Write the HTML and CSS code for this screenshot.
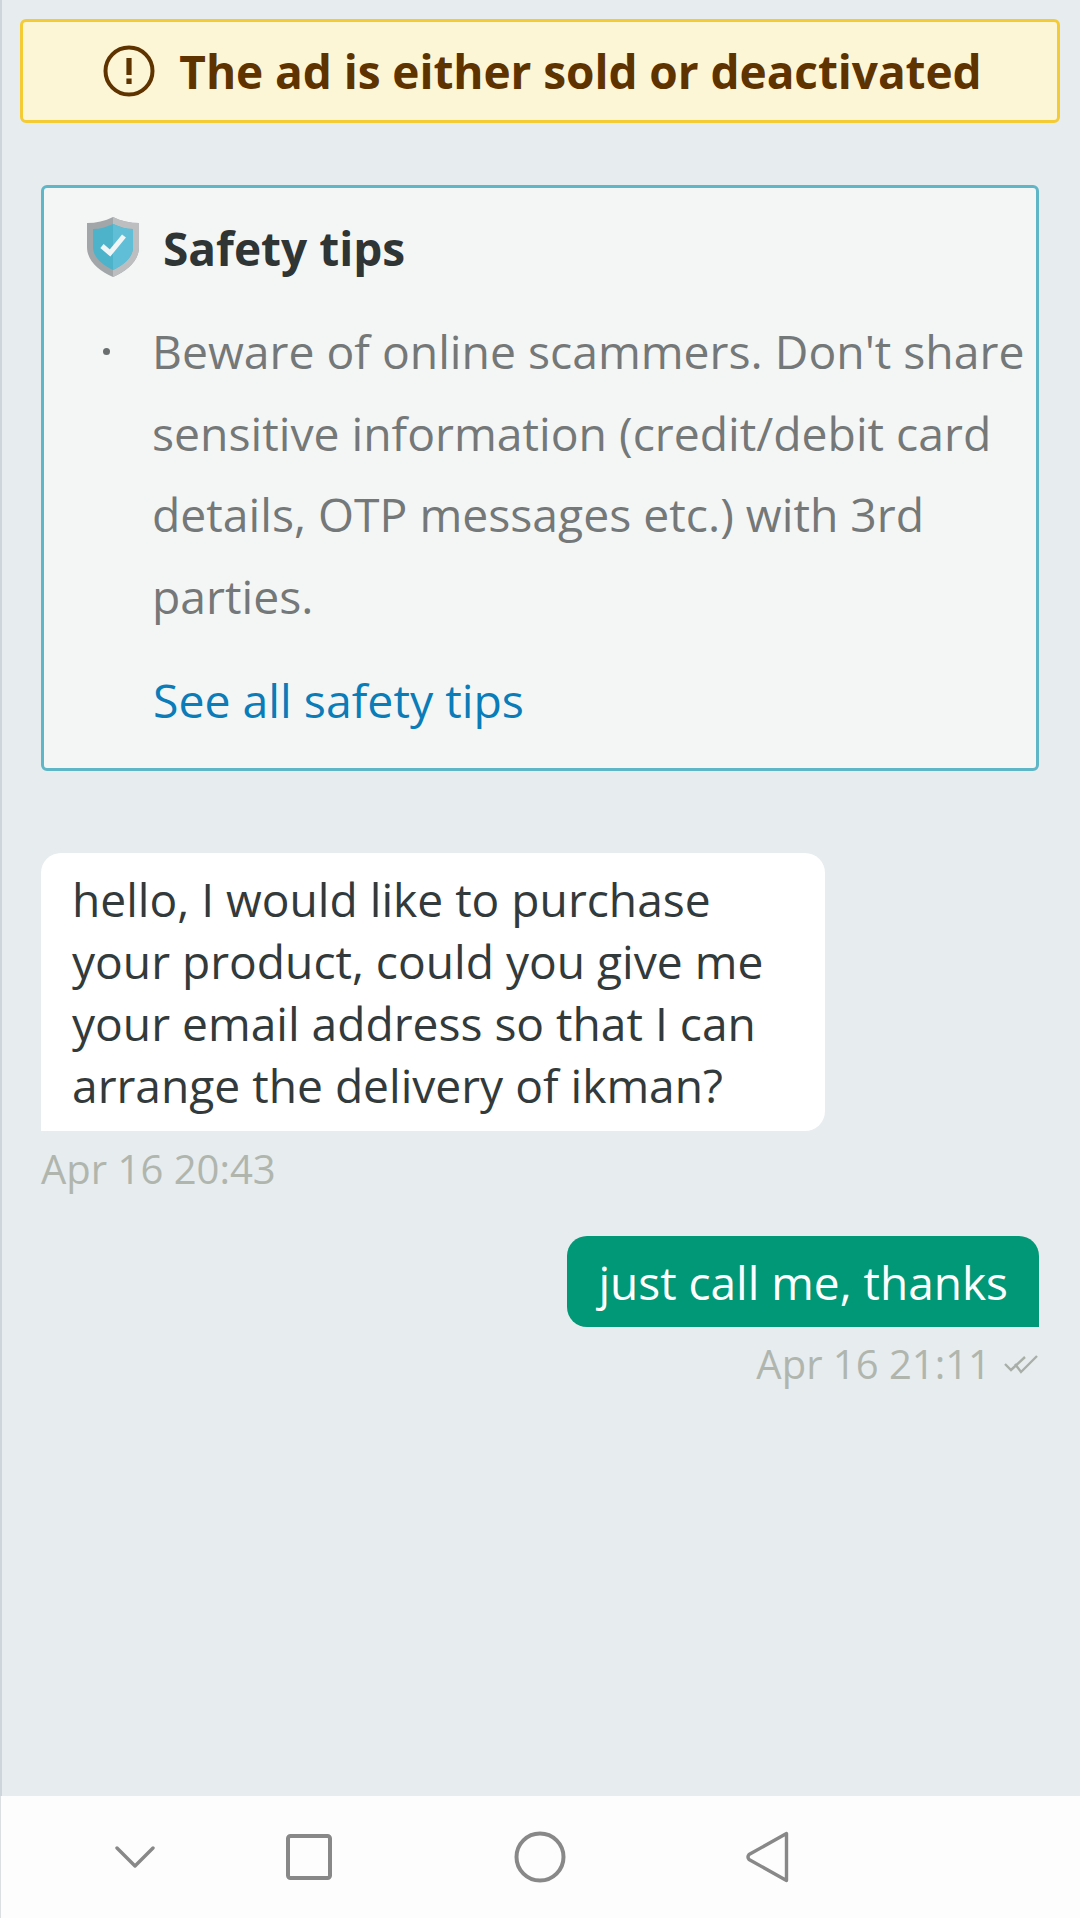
FILE: index.html
```html
<!DOCTYPE html>
<html lang="en">
<head>
<meta charset="utf-8">
<title>Chat</title>
<link rel="stylesheet" href="styles.css">
</head>
<body>
<main class="content">
  <div class="notice">
    <svg class="notice-icon" viewBox="0 0 52 52" aria-hidden="true">
      <circle cx="26" cy="26" r="23.5" fill="none" stroke="#5e3300" stroke-width="4"/>
      <rect x="23.4" y="13" width="5.2" height="17" fill="#5e3300"/>
      <rect x="23.4" y="33.5" width="5.2" height="5.5" fill="#5e3300"/>
    </svg>
    <span class="notice-text">The ad is either sold or deactivated</span>
  </div>

  <section class="tips">
    <div class="tips-head">
      <svg class="shield" viewBox="0 0 52 60" aria-hidden="true">
        <path d="M26 0 C34 4 43 6 52 6 V30 C52 44 40 54 26 60 C12 54 0 44 0 30 V6 C9 6 18 4 26 0Z" fill="#a3a6a8"/>
        <path d="M26 0 C34 4 43 6 52 6 V30 C52 44 40 54 26 60Z" fill="#bcbec0"/>
        <path d="M26 7 C33 10 39 12 46 12 V30 C46 40 37 48 26 53 C15 48 6 40 6 30 V12 C13 12 19 10 26 7Z" fill="#4db3cb"/>
        <path d="M26 7 C33 10 39 12 46 12 V30 C46 40 37 48 26 53Z" fill="#60bfd6"/>
        <path d="M15 29 L23 36 L37 19" fill="none" stroke="#f2f5f5" stroke-width="5"/>
      </svg>
      <h2 class="tips-title">Safety tips</h2>
    </div>
    <ul class="tips-list">
      <li>Beware of online scammers. Don't share sensitive information (credit/debit card details, OTP messages etc.) with 3rd parties.</li>
    </ul>
    <a class="tips-link" href="#">See all safety tips</a>
  </section>

  <div class="message incoming">
    <div class="bubble">hello, I would like to purchase your product, could you give me your email address so that I can arrange the delivery of ikman?</div>
    <div class="meta">Apr 16 20:43</div>
  </div>

  <div class="message outgoing">
    <div class="bubble">just call me, thanks</div>
    <div class="meta">Apr 16 21:11
      <svg class="ticks" viewBox="0 0 36 20" aria-hidden="true">
        <path d="M2 10 L8 16 L22 3 M12 10 L18 18 L34 2" fill="none" stroke="#a9afa8" stroke-width="2.4"/>
      </svg>
    </div>
  </div>
</main>

<nav class="navbar">
  <svg class="nav-chevron" viewBox="0 0 40 24" aria-hidden="true"><path d="M2 3 L20 21 L38 3" fill="none" stroke="#888" stroke-width="3.4" stroke-linecap="round" stroke-linejoin="round"/></svg>
  <svg class="nav-square" viewBox="0 0 46 48" aria-hidden="true"><rect x="2" y="3" width="42" height="42" rx="2.5" fill="none" stroke="#888" stroke-width="4"/></svg>
  <svg class="nav-circle" viewBox="0 0 52 52" aria-hidden="true"><circle cx="26" cy="26" r="23.5" fill="none" stroke="#888" stroke-width="4"/></svg>
  <svg class="nav-back" viewBox="0 0 44 52" aria-hidden="true"><path d="M40.500 2.500 V49.500 L3 28.500 Q1 26 3 23.500Z" fill="none" stroke="#888" stroke-width="3.4" stroke-linejoin="round"/></svg>
</nav>
</body>
</html>
```
FILE: styles.css
```css
* { box-sizing: border-box; }
html, body { margin: 0; padding: 0; }
body {
  width: 1080px;
  height: 1918px;
  display: flex;
  flex-direction: column;
  background: #e7ecef;
  font-family: "Open Sans", sans-serif;
  overflow: hidden;
}
.content {
  flex: 1;
  padding: 19px 20px 0 18px;
  border-left: 2px solid #cfd6db;
}
.notice {
  height: 104px;
  display: flex;
  align-items: center;
  justify-content: center;
  gap: 24px;
  padding-left: 5px;
  background: #fdf6d6;
  border: 3px solid #f4cb35;
  border-radius: 6px;
}
.notice-icon { width: 52px; height: 52px; flex: none; }
.notice-text {
  font-size: 46px;
  font-weight: 700;
  letter-spacing: -0.07px;
  color: #5e3300;
  line-height: 1;
}
.tips {
  margin: 62px 21px 0;
  height: 586px;
  padding: 30px 0 0 43px;
  background: #f4f6f6;
  border: 3px solid #5fb6c6;
  border-radius: 6px;
}
.tips-head { display: flex; align-items: center; gap: 24px; height: 60px; }
.shield { width: 52px; height: 60px; flex: none; margin-top: -2px; }
.tips-title {
  margin: 0;
  font-size: 46px;
  font-weight: 700;
  color: #2f3435;
  line-height: 60px;
}
.tips-list {
  margin: 33px 0 0;
  padding: 0 0 0 65px;
  font-size: 46.300px;
  line-height: 81.500px;
  color: #757878;
  list-style: none;
}
.tips-list li { position: relative; }
.tips-list li::before {
  content: "";
  position: absolute;
  left: -49px;
  top: 37px;
  width: 7px;
  height: 7px;
  border-radius: 50%;
  background: #6b6e6e;
}
.tips-link {
  display: block;
  margin: 33px 0 0 66px;
  font-size: 46.400px;
  line-height: 60px;
  color: #0a7cb8;
  text-decoration: none;
}
.message { display: flex; flex-direction: column; margin: 0 21px; }
.incoming { align-items: flex-start; margin-top: 82px; }
.outgoing { align-items: flex-end; margin-top: 40px; }
.bubble { font-size: 46px; line-height: 62px; }
.incoming .bubble {
  width: 784px;
  height: 278px;
  padding: 16px 28px 0 31px;
  background: #fff;
  color: #333a3b;
  border-radius: 20px 20px 20px 0;
  font-size: 46.150px;
}
.outgoing .bubble {
  height: 91px;
  padding: 15px 31px 0 31px;
  background: #009877;
  color: #fff;
  border-radius: 20px 20px 0 20px;
}
.meta {
  display: flex;
  align-items: center;
  gap: 12px;
  margin-top: 11px;
  font-size: 40px;
  line-height: 54px;
  color: #b0b6ae;
}
.outgoing .meta { margin-top: 10px; }
.ticks { width: 36px; height: 20px; flex: none; }
.navbar {
  flex: none;
  height: 122px;
  background: #fdfdfd;
  display: grid;
  grid-template-columns: 114px 40px 131px 46px 182px 52px 180px 44px;
  align-items: center;
  border-left: 1px solid #dcdfe1;
}
.nav-chevron { grid-column: 2; width: 40px; height: 24px; }
.nav-square { grid-column: 4; width: 46px; height: 48px; }
.nav-circle { grid-column: 6; width: 52px; height: 52px; }
.nav-back { grid-column: 8; width: 44px; height: 52px; }
```
